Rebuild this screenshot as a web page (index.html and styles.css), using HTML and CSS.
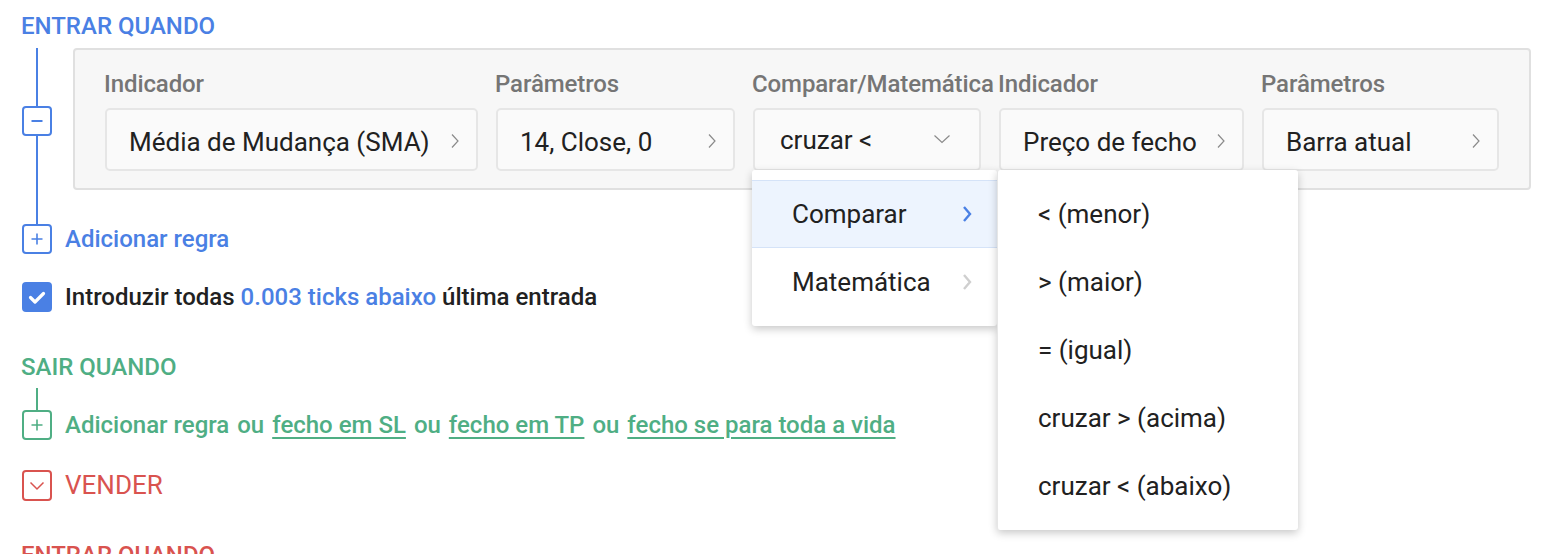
FILE: index.html
```html
<!DOCTYPE html>
<html lang="pt">
<head>
<meta charset="utf-8">
<title>Regras</title>
<link rel="stylesheet" href="styles.css">
</head>
<body>
<div class="page">
  <section class="block">
    <h2 class="heading blue">ENTRAR QUANDO</h2>
    <div class="rule-row">
      <div class="rail rail-rule">
        <span class="seg blue-bg"></span>
        <span class="tbox blue-bd"><svg viewBox="0 0 26 26" width="26" height="26"><path d="M7.5 13h11" stroke="#4a80e4" stroke-width="2" fill="none"/></svg></span>
        <span class="seg blue-bg"></span>
      </div>
      <div class="card">
        <div class="col">
          <div class="label">Indicador</div>
          <div class="field"><span>Média de Mudança (SMA)</span><svg class="chev" viewBox="0 0 10 16" width="10" height="16"><path d="M2 1.5l6 6.5-6 6.5" stroke="#8a8a8a" stroke-width="1.2" fill="none"/></svg></div>
        </div>
        <div class="col">
          <div class="label">Parâmetros</div>
          <div class="field"><span>14, Close, 0</span><svg class="chev" viewBox="0 0 10 16" width="10" height="16"><path d="M2 1.5l6 6.5-6 6.5" stroke="#8a8a8a" stroke-width="1.2" fill="none"/></svg></div>
        </div>
        <div class="col col-menu">
          <div class="label">Comparar/Matemática</div>
          <div class="field field-select"><span>cruzar &lt;</span><svg class="chev-down" viewBox="0 0 18 10" width="18" height="10"><path d="M1.5 1.5l7.5 7 7.5-7" stroke="#8a8a8a" stroke-width="1.2" fill="none"/></svg></div>
          <div class="menu">
            <div class="menu-item active"><span>Comparar</span><svg viewBox="0 0 12 18" width="12" height="18"><path d="M3 2l6 7-6 7" stroke="#4a80e4" stroke-width="2.4" fill="none"/></svg></div>
            <div class="menu-item"><span>Matemática</span><svg viewBox="0 0 12 18" width="12" height="18"><path d="M3 2l6 7-6 7" stroke="#cfcfcf" stroke-width="2.4" fill="none"/></svg></div>
            <div class="submenu">
              <div class="sub-item">&lt; (menor)</div>
              <div class="sub-item">&gt; (maior)</div>
              <div class="sub-item">= (igual)</div>
              <div class="sub-item">cruzar &gt; (acima)</div>
              <div class="sub-item">cruzar &lt; (abaixo)</div>
            </div>
          </div>
        </div>
        <div class="col">
          <div class="label">Indicador</div>
          <div class="field"><span>Preço de fecho</span><svg class="chev" viewBox="0 0 10 16" width="10" height="16"><path d="M2 1.5l6 6.5-6 6.5" stroke="#8a8a8a" stroke-width="1.2" fill="none"/></svg></div>
        </div>
        <div class="col">
          <div class="label">Parâmetros</div>
          <div class="field"><span>Barra atual</span><svg class="chev" viewBox="0 0 10 16" width="10" height="16"><path d="M2 1.5l6 6.5-6 6.5" stroke="#8a8a8a" stroke-width="1.2" fill="none"/></svg></div>
        </div>
      </div>
    </div>
    <div class="rail rail-gap"><span class="seg blue-bg"></span></div>
    <div class="line-row">
      <span class="tbox blue-bd"><svg viewBox="0 0 26 26" width="26" height="26"><path d="M13 7.5v11M7.5 13h11" stroke="#4a80e4" stroke-width="1.6" fill="none"/></svg></span>
      <span class="text-link blue">Adicionar regra</span>
    </div>
    <div class="line-row check-row">
      <span class="checkbox"><svg viewBox="0 0 30 30" width="30" height="30"><path d="M8.5 15.5l4.5 4.5 8.5-8.5" stroke="#fff" stroke-width="3.2" fill="none" stroke-linecap="round" stroke-linejoin="round"/></svg></span>
      <span class="text-strong">Introduzir todas <span class="blue">0.003 ticks abaixo</span> última entrada</span>
    </div>
  </section>

  <section class="block exit">
    <h2 class="heading green">SAIR QUANDO</h2>
    <div class="rail rail-exit"><span class="seg green-bg"></span></div>
    <div class="line-row">
      <span class="tbox green-bd"><svg viewBox="0 0 26 26" width="26" height="26"><path d="M13 7.5v11M7.5 13h11" stroke="#4fae84" stroke-width="1.6" fill="none"/></svg></span>
      <span class="text-strong green">Adicionar regra <span class="or">ou</span> <span class="u">fecho em SL</span> <span class="or">ou</span> <span class="u">fecho em TP</span> <span class="or">ou</span> <span class="u">fecho se para toda a vida</span></span>
    </div>
  </section>

  <section class="block sell">
    <div class="line-row">
      <span class="tbox red-bd tall"><svg viewBox="0 0 26 28" width="26" height="28"><path d="M6.5 11.5l6.5 6.5 6.5-6.5" stroke="#d9534f" stroke-width="1.5" fill="none"/></svg></span>
      <span class="sell-title">VENDER</span>
    </div>
    <h2 class="heading red bottom-head">ENTRAR QUANDO</h2>
  </section>
</div>
</body>
</html>
```
FILE: styles.css
```css
* { box-sizing: border-box; }
html, body { margin: 0; padding: 0; background: #fff; }
body {
  font-family: Roboto, "Liberation Sans", Arial, sans-serif;
  color: #212121;
  overflow: hidden;
  height: 554px;
}
.page {
  padding: 12px 35px 0 22px;
}
.blue { color: #4a80e4; }
.green { color: #4fae84; }
.red { color: #d9534f; }
.blue-bg { background: #4a80e4; }
.green-bg { background: #4fae84; }

.heading {
  margin: 0 0 0 -1px;
  font-size: 24px;
  line-height: 28px;
  font-weight: 500;
  white-space: nowrap;
}

.rule-row {
  display: flex;
  gap: 21px;
  margin-top: 8px;
}
.rail {
  width: 30px;
  display: flex;
  justify-content: center;
}
.rail-rule {
  display: grid;
  grid-template-rows: 58px 30px 1fr;
  justify-items: center;
  flex: 0 0 30px;
}
.seg { width: 2px; display: block; height: 100%; }
.rail-gap { height: 34px; }
.rail-exit { height: 22px; margin-top: 7px; }

.tbox {
  width: 30px;
  height: 30px;
  border-width: 2px;
  border-style: solid;
  border-radius: 4px;
  background: #fff;
  display: flex;
  align-items: center;
  justify-content: center;
  flex: 0 0 30px;
}
.tbox.blue-bd { border-color: #4a80e4; }
.tbox.green-bd { border-color: #4fae84; }
.tbox.red-bd { border-color: #d9534f; }
.tbox.tall { height: 31px; }

.card {
  flex: 1;
  height: 142px;
  background: #f7f7f7;
  border: 2px solid #e0e0e0;
  border-radius: 4px;
  padding: 20px 30px 0 30px;
  display: grid;
  grid-template-columns: 373px 239px 228px 245px 1fr;
  column-gap: 18px;
  align-items: start;
}
.col { position: relative; min-width: 0; }
.label {
  font-size: 24px;
  line-height: 28px;
  font-weight: 500;
  color: #757575;
  white-space: nowrap;
  margin-left: -1px;
  letter-spacing: -0.1px;
}
.field {
  margin-top: 10px;
  height: 63px;
  background: #fafafa;
  border: 2px solid #e6e6e6;
  border-radius: 5px;
  display: flex;
  align-items: center;
  justify-content: space-between;
  padding: 0 16px 0 22px;
  font-size: 26px;
  color: #212121;
  white-space: nowrap;
}
.field span { padding-top: 4px; }
.field-select { padding: 0 28px 0 25px; }
.field-select span { padding-top: 0; }
.chev { flex: 0 0 auto; margin-top: 2px; }
.chev-down { flex: 0 0 auto; margin-top: -2px; }

.menu {
  position: absolute;
  left: -1px;
  top: 100px;
  width: 245px;
  background: #fff;
  border-radius: 3px;
  box-shadow: 0 3px 8px rgba(0,0,0,0.22);
  padding: 10px 0;
  z-index: 5;
}
.menu-item {
  height: 68px;
  display: flex;
  align-items: center;
  justify-content: space-between;
  padding: 0 24px 0 40px;
  font-size: 26px;
  color: #212121;
}
.menu-item.active {
  background: #edf4fe;
  border-top: 1px solid #d5e3f8;
  border-bottom: 1px solid #d5e3f8;
}
.submenu {
  position: absolute;
  left: 100%;
  top: 0;
  width: 301px;
  background: #fff;
  border-radius: 3px;
  box-shadow: 0 3px 8px rgba(0,0,0,0.22);
  padding: 10px 0;
  border-left: 1px solid #e6e6e6;
}
.sub-item {
  height: 68px;
  display: flex;
  align-items: center;
  padding-left: 40px;
  font-size: 26px;
  color: #212121;
  white-space: nowrap;
}

.line-row {
  display: flex;
  align-items: center;
  gap: 13px;
  height: 30px;
}
.text-link {
  font-size: 24px;
  font-weight: 500;
}
.text-strong {
  font-size: 24px;
  font-weight: 500;
  white-space: nowrap;
}
.check-row { margin-top: 28px; }
.checkbox {
  width: 30px;
  height: 30px;
  border-radius: 4px;
  background: #4a80e4;
  display: block;
  flex: 0 0 30px;
}
.checkbox svg { display: block; }

.exit { margin-top: 41px; }
.u {
  text-decoration: underline;
  text-decoration-thickness: 2px;
  text-underline-offset: 4px;
}
.or { color: #4fae84; margin: 0 2px; }

.sell { margin-top: 30px; }
.sell-title {
  font-size: 26px;
  color: #d9534f;
  font-weight: 400;
}
.bottom-head { margin-top: 41px; }
```
